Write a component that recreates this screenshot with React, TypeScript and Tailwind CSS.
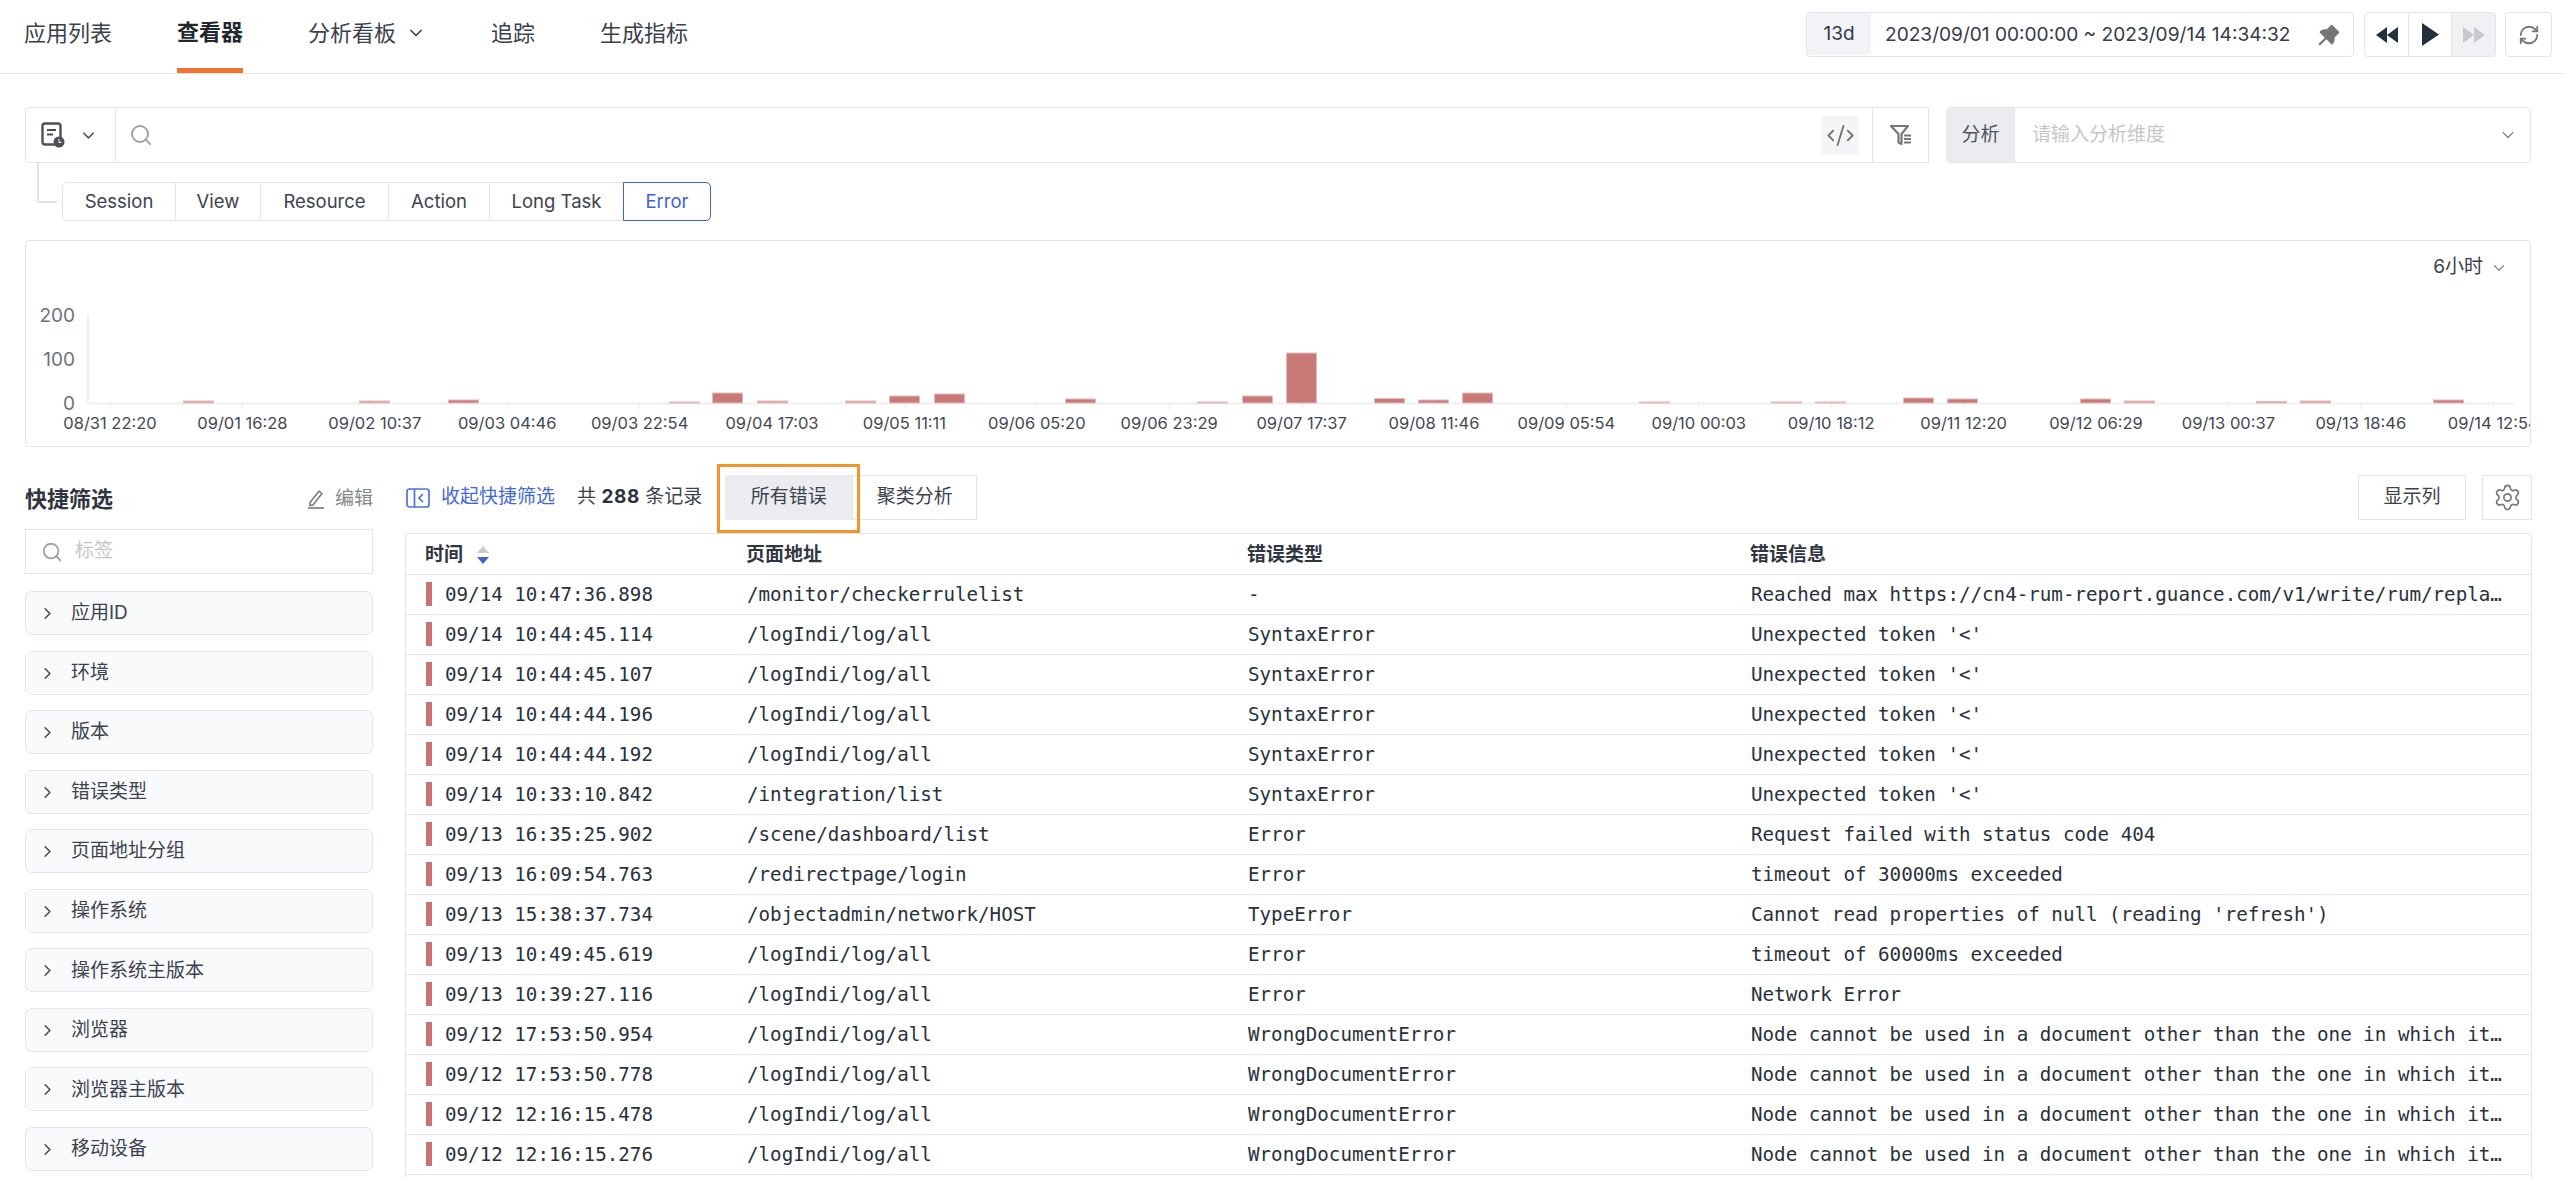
import React from "react";
import { ChevronDown, ChevronRight, CodeXml, RefreshCw, Search, Settings } from "lucide-react";
import { AiFillPushpin } from "react-icons/ai";

const navItems = ["应用列表", "查看器", "分析看板", "追踪", "生成指标"];
const typeTabs = ["Session", "View", "Resource", "Action", "Long Task", "Error"];
const filters = ["应用ID", "环境", "版本", "错误类型", "页面地址分组", "操作系统", "操作系统主版本", "浏览器", "浏览器主版本", "移动设备"];

const ticks = [
  "08/31 22:20", "09/01 16:28", "09/02 10:37", "09/03 04:46", "09/03 22:54", "09/04 17:03", "09/05 11:11",
  "09/06 05:20", "09/06 23:29", "09/07 17:37", "09/08 11:46", "09/09 05:54", "09/10 00:03", "09/10 18:12",
  "09/11 12:20", "09/12 06:29", "09/13 00:37", "09/13 18:46", "09/14 12:54",
];

// x position (page px) and height of each bar
const bars: [number, number][] = [
  [183, 2], [359, 2], [448, 3], [669, 1], [712, 10], [757, 2], [845, 2], [889, 7], [934, 9], [1065, 4],
  [1197, 1], [1242, 7], [1286, 50], [1374, 4.5], [1418, 3], [1462, 10], [1639, 1], [1771, 1], [1815, 1],
  [1903, 5], [1947, 4], [2080, 4], [2124, 2], [2256, 1.5], [2300, 2], [2433, 3],
];

const unexpected = "Unexpected token '<'";
const nodeErr = "Node cannot be used in a document other than the one in which it was created";
const rows = [
  ["09/14 10:47:36.898", "/monitor/checkerrulelist", "-", "Reached max https://cn4-rum-report.guance.com/v1/write/rum/replay?ddsource=browser"],
  ["09/14 10:44:45.114", "/logIndi/log/all", "SyntaxError", unexpected],
  ["09/14 10:44:45.107", "/logIndi/log/all", "SyntaxError", unexpected],
  ["09/14 10:44:44.196", "/logIndi/log/all", "SyntaxError", unexpected],
  ["09/14 10:44:44.192", "/logIndi/log/all", "SyntaxError", unexpected],
  ["09/14 10:33:10.842", "/integration/list", "SyntaxError", unexpected],
  ["09/13 16:35:25.902", "/scene/dashboard/list", "Error", "Request failed with status code 404"],
  ["09/13 16:09:54.763", "/redirectpage/login", "Error", "timeout of 30000ms exceeded"],
  ["09/13 15:38:37.734", "/objectadmin/network/HOST", "TypeError", "Cannot read properties of null (reading 'refresh')"],
  ["09/13 10:49:45.619", "/logIndi/log/all", "Error", "timeout of 60000ms exceeded"],
  ["09/13 10:39:27.116", "/logIndi/log/all", "Error", "Network Error"],
  ["09/12 17:53:50.954", "/logIndi/log/all", "WrongDocumentError", nodeErr],
  ["09/12 17:53:50.778", "/logIndi/log/all", "WrongDocumentError", nodeErr],
  ["09/12 12:16:15.478", "/logIndi/log/all", "WrongDocumentError", nodeErr],
  ["09/12 12:16:15.276", "/logIndi/log/all", "WrongDocumentError", nodeErr],
];

const Chart: React.FC = () => (
  <svg width="2504" height="153" className="block" style={{ fontFamily: "Inter, sans-serif" }}>
    <g transform="translate(-26 -293)">
      <line x1="88" y1="314" x2="88" y2="403" stroke="#eceded" strokeWidth="1.5" />
      <line x1="88" y1="403.5" x2="2514" y2="403.5" stroke="#f0f0f2" strokeWidth="2" />
      {ticks.map((t, i) => {
        const x = 110 + i * 132.4;
        return (
          <g key={t}>
            <line x1={x} y1="404" x2={x} y2="410" stroke="#eeeeef" />
            <text x={x} y="429" textAnchor="middle" fontSize="16.5" fill="#3f4852">{t}</text>
          </g>
        );
      })}
      {[["200", 322], ["100", 366], ["0", 410]].map(([label, y]) => (
        <text key={label} x="75" y={y} textAnchor="end" fontSize="19" fill="#6e7177">{label}</text>
      ))}
      {bars.map(([x, h]) => (
        <rect key={x} x={x + 0.5} y={403 - h} width="30" height={h} fill={h < 1.5 ? "#efc4c2" : h < 2.5 ? "#dc9e9c" : "#c97a78"} stroke="#e6bbb9" strokeWidth="1" />
      ))}
    </g>
  </svg>
);

export default function App() {
  return (
    <div className="w-[2564px] h-[1178px] overflow-hidden bg-white text-[#333a44] text-[19px] flex flex-col font-['Inter','Noto_Sans_CJK_SC',sans-serif]">
      {/* top nav */}
      <div className="h-[74px] shrink-0 border-b border-[#e5e6e8] flex items-stretch pl-[24px] pr-[12px]">
        <div className="flex gap-[65px] text-[22px] text-[#3a414b]">
          {navItems.map((item, i) => (
            <div key={item} className={i === 1 ? "flex items-center h-[73px] pb-[3px] font-semibold text-[#23282f] border-b-[5px] border-[#f4722f]" : "flex items-center h-[73px] pb-[7px]"}>
              {item}
              {i === 2 && <ChevronDown size={20} strokeWidth={2} className="ml-[10px]" />}
            </div>
          ))}
        </div>
        <div className="ml-auto flex items-start pt-[12px]">
          <div className="w-[548px] h-[45px] border border-[#e4e5e8] rounded-[4px] flex items-center">
            <div className="w-[64px] h-[42px] mb-[1px] bg-[#f2f3f6] flex items-center justify-center">13d</div>
            <div className="ml-[14px] text-[19.1px] text-[#333b47] whitespace-nowrap">2023/09/01 00:00:00 ~ 2023/09/14 14:34:32</div>
            <AiFillPushpin size={28} className="ml-auto mr-[10px] text-[#757575]" />
          </div>
          <div className="ml-[10px] w-[132px] h-[45px] border border-[#e4e5e8] rounded-[4px] flex overflow-hidden">
            <div className="w-[44px] flex items-center justify-center border-r border-[#e4e5e8]">
              <svg width="24" height="16" viewBox="0 0 24 16" fill="#24303c"><path d="M12 0v16L1 8zM23 0v16L12 8z" /></svg>
            </div>
            <div className="w-[43px] flex items-center justify-center border-r border-[#e4e5e8]">
              <svg width="17" height="23" viewBox="0 0 17 23" fill="#24303c"><path d="M0 0l17 11.5L0 23z" /></svg>
            </div>
            <div className="flex-1 bg-[#f0f1f3] flex items-center justify-center">
              <svg width="24" height="16" viewBox="0 0 24 16" fill="#c6c9cf"><path d="M1 0l11 8-11 8zM12 0l11 8-11 8z" /></svg>
            </div>
          </div>
          <div className="ml-[9px] w-[47px] h-[45px] border border-[#e4e5e8] rounded-[4px] flex items-center justify-center">
            <RefreshCw size={22} strokeWidth={2} className="text-[#777]" />
          </div>
        </div>
      </div>

      <div className="pl-[25px] pr-[33px] flex-1 flex flex-col min-h-0">
        {/* search row */}
        <div className="mt-[33px] flex gap-[17px] h-[56px]">
          <div className="w-[1904px] border border-[#e4e5e8] rounded-l-[4px] flex items-stretch">
            <div className="w-[90px] border-r border-[#e4e5e8] flex items-center pl-[15px]">
              <svg width="24" height="26" viewBox="0 0 24 26" fill="none">
                <rect x="1.5" y="1.5" width="18" height="21" rx="2.5" stroke="#4d5157" strokeWidth="2.4" />
                <path d="M6 8h9M6 12.5h6" stroke="#4d5157" strokeWidth="2.2" />
                <circle cx="18" cy="20" r="5.5" fill="#4d5157" />
                <path d="M18 17v3.5h2.5" stroke="#fff" strokeWidth="1" />
              </svg>
              <ChevronDown size={19} strokeWidth={1.8} className="ml-[14px] text-[#555]" />
            </div>
            <Search size={24} strokeWidth={2} className="self-center ml-[13px] text-[#a3a3a3]" />
            <div className="ml-auto self-center w-[38px] h-[39px] mr-[13px] bg-[#f4f5f6] rounded-[4px] flex items-center justify-center">
              <CodeXml size={29} strokeWidth={1.5} className="text-[#6f6f6f]" />
            </div>
            <div className="w-[56px] border-l border-[#e4e5e8] flex items-center justify-center">
              <svg width="24" height="22" viewBox="0 0 24 22" fill="none">
                <path d="M2 2h17l-6.5 8v10l-3-1.5V10z" stroke="#777" strokeWidth="2.2" strokeLinejoin="round" />
                <path d="M15 11.5h7M15 15h7M15 18.5h7" stroke="#777" strokeWidth="2" />
              </svg>
            </div>
          </div>
          <div className="w-[585px] border border-[#e4e5e8] rounded-[4px] flex items-center overflow-hidden">
            <div className="w-[68px] h-full bg-[#ebecef] border-r border-[#e4e5e8] flex items-center justify-center text-[#4f545c]">分析</div>
            <div className="ml-[17px] text-[#c4c6c9]">请输入分析维度</div>
            <ChevronDown size={20} strokeWidth={1.6} className="ml-auto mr-[12px] text-[#7f8794]" />
          </div>
        </div>

        {/* type tabs */}
        <div className="mt-[19px] flex items-start">
          <div className="ml-[12px] -mt-[19px] w-[20px] h-[40px] border-l-2 border-b-2 border-[#e3e4e9]" />
          <div className="ml-[5px] h-[39px] flex border border-[#e4e5e8] rounded-[5px] text-[18.5px] text-[#3c434d]">
            {typeTabs.map((t) =>
              t === "Error" ? (
                <div key={t} className="w-[88px] -my-px -mr-px pt-[1px] border border-[#3f63c9] rounded-r-[5px] text-[#3f63c9] flex items-center justify-center">{t}</div>
              ) : (
                <div key={t} className={t === "Session" ? "w-[113px] pt-[1px] border-r border-[#e4e5e8] flex items-center justify-center" : t === "View" ? "w-[85px] pt-[1px] border-r border-[#e4e5e8] flex items-center justify-center" : t === "Resource" ? "w-[128px] pt-[1px] border-r border-[#e4e5e8] flex items-center justify-center" : t === "Action" ? "w-[101px] pt-[1px] border-r border-[#e4e5e8] flex items-center justify-center" : "w-[133px] pt-[1px] flex items-center justify-center"}>{t}</div>
              ),
            )}
          </div>
        </div>

        {/* chart */}
        <div className="mt-[19px] h-[207px] border border-[#e4e5e8] rounded-[4px] overflow-hidden">
          <div className="h-[52px] flex items-center justify-end pr-[22px] pt-[1px] text-[19px] text-[#3a414b]">
            6小时
            <ChevronDown size={18} strokeWidth={1.7} className="ml-[7px] text-[#7f8794]" />
          </div>
          <Chart />
        </div>

        {/* lower area */}
        <div className="mt-[28px] flex gap-[32px] flex-1 min-h-0 -mr-px">
          <div className="w-[348px] shrink-0">
            <div className="h-[48px] flex items-center">
              <span className="text-[22px] font-semibold text-[#30363f]">快捷筛选</span>
              <svg width="18" height="20" viewBox="0 0 18 20" fill="none" className="ml-auto">
                <path d="M3 13.5L12 2l3 2.5-9 11.5-3.2.6z" stroke="#777" strokeWidth="1.5" strokeLinejoin="round" />
                <path d="M1 19h16" stroke="#777" strokeWidth="1.6" />
              </svg>
              <span className="ml-[10px] text-[#85888d]">编辑</span>
            </div>
            <div className="mt-[6px] h-[45px] border border-[#e4e5e8] flex items-center pl-[15px]">
              <Search size={22} strokeWidth={2} className="text-[#a3a3a3]" />
              <span className="ml-[12px] text-[#c4c6c9]">标签</span>
            </div>
            <div className="mt-[17px] flex flex-col gap-[15.55px]">
              {filters.map((f) => (
                <div key={f} className="h-[44px] shrink-0 bg-[#f9fafc] border border-[#e4e5e8] rounded-[7px] flex items-center pl-[12px] pt-[1px]">
                  <ChevronRight size={19} strokeWidth={1.8} className="text-[#444]" />
                  <span className="ml-[14px] text-[#3c434d]">{f}</span>
                </div>
              ))}
            </div>
          </div>

          <div className="flex-1 min-w-0 flex flex-col">
            <div className="h-[45px] shrink-0 flex items-center">
              <svg width="24" height="20" viewBox="0 0 24 20" fill="none" className="ml-px">
                <rect x="1" y="1" width="22" height="18" rx="2.5" stroke="#4f73d4" strokeWidth="1.7" />
                <path d="M8.5 1v18" stroke="#4f73d4" strokeWidth="1.7" />
                <path d="M17 6l-4 4 4 4" stroke="#4f73d4" strokeWidth="1.7" />
              </svg>
              <span className="ml-[11px] text-[#4169d1]">收起快捷筛选</span>
              <span className="ml-[22px] text-[#3c434d]">共 <b className="font-bold text-[#2c323a] tracking-[0.6px]">288</b> 条记录</span>
              <div className="relative ml-[23px] w-[127px] h-[45px] bg-[#ebecf0] rounded-l-[3px] flex items-center justify-center text-[#3c434d]">
                所有错误
                <div className="absolute -left-[8px] -top-[11px] w-[143px] h-[69px] border-[3px] border-[#f0952e]" />
              </div>
              <div className="w-[125px] h-[45px] border border-[#e4e5e8] flex items-center justify-center text-[#3c434d]">聚类分析</div>
              <div className="ml-auto w-[108px] h-[45px] border border-[#e4e5e8] flex items-center justify-center text-[#3c434d]">显示列</div>
              <div className="ml-[16px] w-[50px] h-[45px] border border-[#e4e5e8] flex items-center justify-center">
                <Settings size={29} strokeWidth={1.4} className="text-[#777]" />
              </div>
            </div>

            <div className="mt-[13px] flex-1 min-h-0 border-x border-t border-[#e4e5e8] rounded-t-[4px]">
              <div className="h-[41px] grid grid-cols-[320px_501px_503px_1fr] pl-[20px] pt-[2px] items-center border-b border-[#e4e5e8] font-semibold text-[#30363f]">
                <div className="flex items-center -ml-px">
                  时间
                  <svg width="14" height="20" viewBox="0 0 14 20" className="ml-[13px]">
                    <path d="M7 1l6 7H1z" fill="#c8c9cc" />
                    <path d="M7 19l6-7H1z" fill="#3f63c9" />
                  </svg>
                </div>
                <div>页面地址</div>
                <div>错误类型</div>
                <div>错误信息</div>
              </div>
              {rows.map((r) => (
                <div key={r[0]} className="h-[40px] grid grid-cols-[320px_501px_503px_1fr] pl-[20px] items-center border-b border-[#e6e7ea] text-[19.2px] text-[#28313c] font-['DejaVu_Sans_Mono',monospace]">
                  <div className="flex items-center pt-[1px]">
                    <span className="w-[6px] h-[24px] bg-[#c97472] mr-[13px] -mt-[1px]" />
                    {r[0]}
                  </div>
                  <div className="pl-[1px] pt-[2px] truncate">{r[1]}</div>
                  <div className="pl-[1px] pt-[2px] truncate">{r[2]}</div>
                  <div className="pl-[1px] pr-[29px] pt-[2px] truncate">{r[3]}</div>
                </div>
              ))}
            </div>
          </div>
        </div>
      </div>
    </div>
  );
}
